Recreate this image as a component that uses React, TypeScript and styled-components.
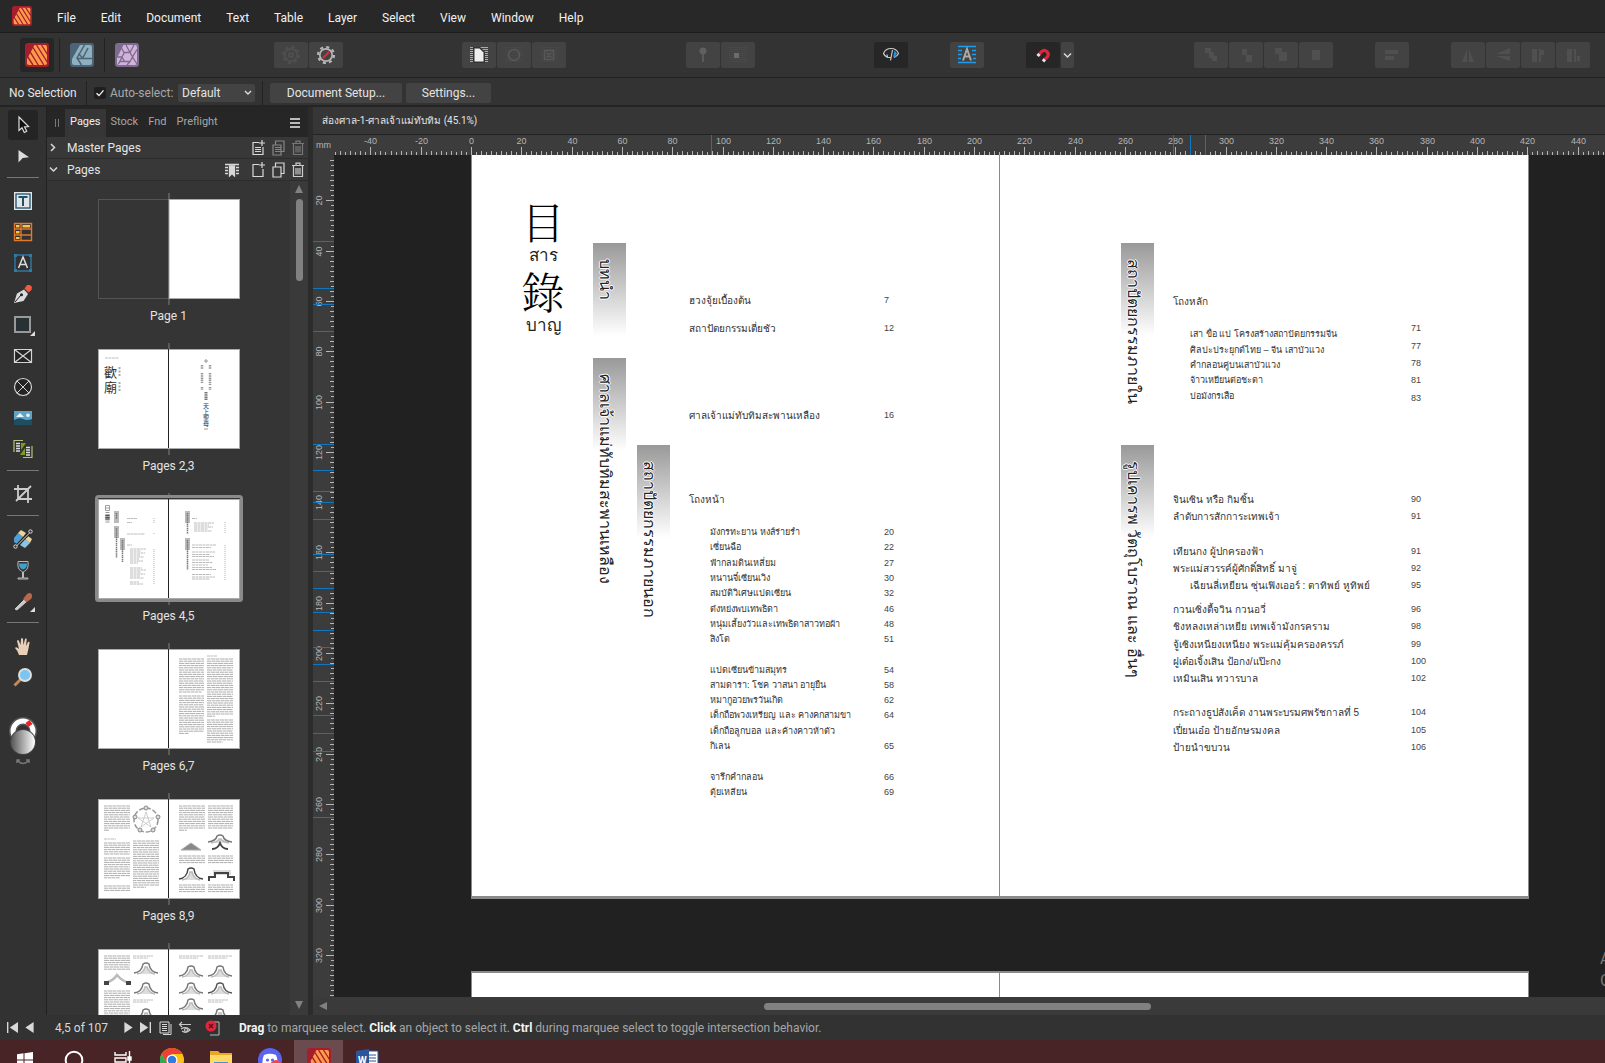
import React from "react";
import styled, { createGlobalStyle, css } from "styled-components";

const UI = `Roboto, "Open Sans", sans-serif`;
const DOC = `"Liberation Sans", "Noto Sans CJK TC", sans-serif`;

const Global = createGlobalStyle`
  * { box-sizing: border-box; }
  html, body { margin: 0; background: #212121; }
  body { font: 12px/16px ${UI}; color: #e4e4e4; overflow: hidden; }
  button, select, input { font: inherit; color: inherit; margin: 0; }
  button { border: 0; padding: 0; background: none; }
  svg { display: block; flex: none; }
  ul { list-style: none; margin: 0; padding: 0; }
`;

const Shell = styled.div`
  height: 100vh;
  display: flex;
  flex-direction: column;
  background: #323232;
  overflow: hidden;
`;

/* ---------- menu bar ---------- */
const MenuBar = styled.header`
  flex: none;
  height: 33px;
  display: flex;
  align-items: center;
  padding-left: 12px;
  background: #282828;
  border-bottom: 1px solid #1d1d1d;
`;
const Menus = styled.nav`
  display: flex;
  gap: 25px;
  padding: 3px 0 0 25px;
`;
const MenuItem = styled.button`
  color: #f2f2f2;
`;

/* ---------- toolbar ---------- */
const Toolbar = styled.div`
  flex: none;
  height: 45px;
  display: flex;
  align-items: center;
  justify-content: space-between;
  padding: 0 15px 0 20px;
  background: #333;
  border-bottom: 1px solid #222;
`;
const Personas = styled.div`
  display: flex;
  align-items: center;
  padding-right: 10px;
`;
const Persona = styled.button<{ $on?: boolean }>`
  width: 34px;
  height: 34px;
  border-radius: 3px;
  display: grid;
  place-items: center;
  background: ${(p) => (p.$on ? "#262626" : "none")};
`;
const Rule = styled.span<{ $h: number; $m: number }>`
  width: 1px;
  height: ${(p) => p.$h}px;
  margin: 0 ${(p) => p.$m}px;
  background: #222;
`;
const Groups = styled.div`
  display: flex;
  gap: 42px;
`;
const Group = styled.div`
  display: flex;
  gap: 1px;
`;
const ToolBtn = styled.button<{ $dark?: boolean; $slim?: boolean }>`
  width: ${(p) => (p.$slim ? 13 : 34)}px;
  height: 26px;
  border-radius: 2px;
  display: grid;
  place-items: center;
  background: ${(p) => (p.$dark ? "#262626" : "#434343")};
`;

/* ---------- context bar ---------- */
const ContextBar = styled.div`
  flex: none;
  height: 29px;
  display: flex;
  align-items: center;
  padding: 3px 0 0 9px;
  background: #333;
  border-bottom: 2px solid #242424;
`;
const Selection = styled.span`
  width: 70px;
  white-space: nowrap;
`;
const Check = styled.label`
  display: flex;
  align-items: center;
  gap: 4px;
  width: 76px;
  color: #a8a8a8;
  white-space: nowrap;
`;
const Tick = styled.input`
  appearance: none;
  flex: none;
  width: 12px;
  height: 12px;
  border-radius: 2px;
  background: #1f1f1f
    url("data:image/svg+xml,%3Csvg xmlns='http://www.w3.org/2000/svg' viewBox='0 0 12 12'%3E%3Cpath d='M2.5 6.2 5 8.6 9.5 3.4' fill='none' stroke='%23eee' stroke-width='1.4'/%3E%3C/svg%3E");
`;
const Drop = styled.select`
  appearance: none;
  width: 77px;
  height: 18px;
  margin-left: 8px;
  padding: 0 4px;
  border: 0;
  border-radius: 2px;
  line-height: 16px;
  background: #434343
    url("data:image/svg+xml,%3Csvg xmlns='http://www.w3.org/2000/svg' viewBox='0 0 8 6'%3E%3Cpath d='M1 1 4 4 7 1' fill='none' stroke='%23ddd' stroke-width='1.4'/%3E%3C/svg%3E")
    no-repeat right 3px center / 8px 6px;
`;
const PushButton = styled.button<{ $w: number }>`
  width: ${(p) => p.$w}px;
  height: 20px;
  margin-right: 4px;
  border-radius: 2px;
  background: #434343;
`;

/* ---------- body ---------- */
const Body = styled.div`
  flex: 1;
  min-height: 0;
  display: flex;
`;
const Tools = styled.div`
  flex: none;
  width: 47px;
  display: flex;
  flex-direction: column;
  align-items: center;
  padding: 3px 1px 0 0;
  background: #323232;
  border-right: 1px solid #202020;
`;
const Tool = styled.button<{ $on?: boolean }>`
  width: 30px;
  height: ${(p) => (p.$on ? 30 : 31)}px;
  border-radius: 3px;
  display: grid;
  place-items: center;
  background: ${(p) => (p.$on ? "#242424" : "none")};
`;
const ToolRule = styled.hr`
  width: 32px;
  height: 1px;
  margin: 6px 0 7px;
  border: 0;
  background: #777;
`;
const ColourWell = styled.div`
  padding-top: 25px;
`;

const Panel = styled.aside`
  flex: none;
  width: 266px;
  display: flex;
  flex-direction: column;
  padding-right: 5px;
  background: #2c2c2c;
`;
const TabStrip = styled.div`
  flex: none;
  height: 30px;
  display: flex;
  align-items: center;
  padding: 2px 8px 0 7px;
  background: #262626;
`;
const Tab = styled.button<{ $on?: boolean }>`
  height: 28px;
  padding: 0 5px 3px;
  font-size: 11px;
  color: ${(p) => (p.$on ? "#f0f0f0" : "#a6a6a6")};
  background: ${(p) => (p.$on ? "#363636" : "none")};
`;
const Spacer = styled.span`
  flex: 1;
`;
const SectionRow = styled.div`
  flex: none;
  height: 21px;
  display: flex;
  align-items: center;
  padding: 0 4px 0 2px;
  margin-bottom: 1px;
  background: #383838;
`;
const SectionName = styled.span`
  flex: 1;
  padding-left: 9px;
`;
const IconBtn = styled.button<{ $ml?: number }>`
  margin-left: ${(p) => p.$ml ?? 4}px;
`;
const ListArea = styled.div`
  flex: 1;
  min-height: 0;
  display: flex;
`;
const Thumbs = styled.ul`
  flex: 1;
  background: #353535;
  overflow: hidden;
  padding-top: 10px;
`;
const Thumb = styled.li`
  height: 150px;
  display: flex;
  flex-direction: column;
  align-items: center;
  gap: 1px;
`;
const ThumbFrame = styled.div`
  height: 116px;
`;
const VScroll = styled.div`
  flex: none;
  width: 18px;
  display: flex;
  flex-direction: column;
  align-items: center;
  justify-content: space-between;
  padding: 4px 0 6px;
  background: #3a3a3a;
`;
const VTop = styled.div`
  display: flex;
  flex-direction: column;
  align-items: center;
  gap: 6px;
`;
const Handle = styled.div<{ $v?: boolean }>`
  border-radius: 4px;
  background: #818181;
  ${(p) => (p.$v ? css`width: 7px; height: 82px;` : css`width: 46%; height: 7px;`)}
`;

const Doc = styled.main`
  flex: 1;
  min-width: 0;
  display: flex;
  flex-direction: column;
  background: #212121;
`;
const DocTab = styled.div`
  flex: none;
  height: 28px;
  padding: 6px 9px;
  font-size: 10px;
  background: #363636;
  border-bottom: 1px solid #232323;
  white-space: nowrap;
`;
const RulerRow = styled.div`
  flex: none;
  height: 20px;
  display: flex;
  background: #3c3c3c;
`;
const Unit = styled.span`
  flex: none;
  width: 21px;
  padding-left: 3px;
  font: 9px/20px "Liberation Sans", sans-serif;
  color: #b5b5b5;
`;
const Split = styled.div`
  flex: 1;
  min-height: 0;
  display: flex;
`;
const RulerBox = styled.div<{ $v?: boolean }>`
  ${(p) => (p.$v ? css`flex: none; width: 21px;` : css`flex: 1;`)}
  min-width: 0;
  overflow: hidden;
  background: #3c3c3c;
`;
const RulerText = styled.text`
  font: 9px "Liberation Sans", sans-serif;
  fill: #b5b5b5;
  text-anchor: middle;
`;
const Canvas = styled.div`
  position: relative;
  flex: 1;
  overflow: hidden;
  background: #212121;
`;
const Spread = styled.article<{ $top: number; $h: number }>`
  position: absolute;
  left: 137px;
  top: ${(p) => p.$top}px;
  width: 1058px;
  height: ${(p) => p.$h}px;
  border: 1px solid #8a8a8a;
  border-width: 2px 1px 3px;
  background: linear-gradient(#8a8a8a, #8a8a8a) 527px 0 / 1px 100% no-repeat #fff;
  color: #333;
  font-family: ${DOC};
`;
const Place = styled.div<{ $x: number; $y: number; $w?: number }>`
  position: absolute;
  left: ${(p) => p.$x}px;
  top: ${(p) => p.$y}px;
  ${(p) => p.$w && css`width: ${p.$w}px;`}
`;
const Title = styled.h1`
  margin: 0;
  width: 60px;
  display: flex;
  flex-direction: column;
  align-items: center;
  font-weight: 300;
  color: #000;
`;
const Han = styled.span`
  font: 300 43px/44px "Noto Serif CJK TC", "Noto Sans CJK TC", sans-serif;
`;
const Thai = styled.span`
  font-size: 17px;
  line-height: 26px;
  color: #222;
`;
const Band = styled.h2`
  margin: 0;
  width: 33px;
  min-height: 93px;
  padding: 16px 8px 0 0;
  display: flex;
  align-items: center;
  writing-mode: vertical-rl;
  font-size: 16px;
  line-height: 25px;
  font-weight: 400;
  white-space: nowrap;
  color: #222;
  background: linear-gradient(#999, #fff) 0 0 / 100% 93px no-repeat;
  text-shadow: 1px 0 #fff, -1px 0 #fff, 0 1px #fff, 0 -1px #fff;
`;
const Rows = styled.ul<{ $h: number; $size: number }>`
  display: grid;
  grid-auto-rows: 1fr;
  align-items: center;
  height: ${(p) => p.$h}px;
  font-size: ${(p) => p.$size}px;
  line-height: 15px;
`;
const Row = styled.li<{ $in?: boolean }>`
  display: flex;
  justify-content: space-between;
  white-space: nowrap;
  padding-left: ${(p) => (p.$in ? 17 : 0)}px;
`;
const PageNo = styled.span`
  width: 20px;
  font-size: 9px;
  color: #444;
`;
const Watermark = styled.div`
  position: absolute;
  left: 1266px;
  bottom: 5px;
  font-size: 16px;
  line-height: 22px;
  color: #777;
  white-space: nowrap;
`;
const HScroll = styled.div`
  flex: none;
  height: 18px;
  display: flex;
  align-items: center;
  padding-left: 6px;
  background: #3a3a3a;
`;
const HTrack = styled.div`
  flex: 1;
  padding-left: 34%;
`;

/* ---------- status + taskbar ---------- */
const Status = styled.footer`
  flex: none;
  height: 25px;
  display: flex;
  align-items: center;
  padding-left: 7px;
  background: #323232;
  color: #a6a6a6;
  b { color: #f4f4f4; font-weight: 700; }
`;
const Nav = styled.div`
  display: flex;
  align-items: center;
  gap: 6px;
  width: 232px;
  color: #d8d8d8;
`;
const Count = styled.span`
  width: 76px;
  padding-left: 14px;
`;
const Taskbar = styled.div`
  flex: none;
  height: 23px;
  display: flex;
  overflow: hidden;
  background: #482427;
`;
const Task = styled.button<{ $on?: boolean }>`
  width: 49px;
  height: 40px;
  display: grid;
  place-items: center;
  background: ${(p) => (p.$on ? "#6c4b4f" : "none")};
`;

/* ---------- drawings ---------- */
const Publisher = ({ s = 24 }: { s?: number }) => (
  <svg width={s} height={s} viewBox="0 0 24 24">
    <rect width="24" height="24" rx="3" fill="#a41f2b" />
    <path d="M9.5 2H20a2 2 0 0 1 2 2v16a2 2 0 0 1-2 2H4a2 2 0 0 1-2-2v-4Z" fill="#ff9a4d" />
    <path d="M2.5 13.500 8 22M5.300 9.200 13.500 22.500M8 4.500 18.800 22M11.500 2 22.500 19.500M16.500 2 22.500 11.500" stroke="#a41f2b" strokeWidth="1.400" />
  </svg>
);
const Designer = () => (
  <svg width="24" height="24" viewBox="0 0 24 24">
    <rect width="24" height="24" rx="3" fill="#4d6379" />
    <path d="M10 2h10a2 2 0 0 1 2 2v16a2 2 0 0 1-2 2H4a2 2 0 0 1-2-2v-4Z" fill="#8fb0bd" />
    <path d="M14.500 2 7 15l4.500 7M7 15.500h15M12.500 15l-4-4.500M12.500 15.500 18 5" stroke="#4d6379" strokeWidth="1.500" fill="none" />
  </svg>
);
const Photo = () => (
  <svg width="24" height="24" viewBox="0 0 24 24">
    <rect width="24" height="24" rx="3" fill="#7d6b92" />
    <path d="M8.500 2H20a2 2 0 0 1 2 2v16a2 2 0 0 1-2 2H4a2 2 0 0 1-2-2v-5Z" fill="#d3b4d8" />
    <path d="M9.500 9.500h5.500l2.500 4.500-2.500 4.500H9.500L7 14ZM6.500 5l2.500 4.500h6L11 2M19 2l-4 7.500M22 6.500 17.500 14 22 21M15 18.500H5M12 22l3-3.500M7 14l-3.500 7M2 14h5" stroke="#7d6b92" strokeWidth="1.300" fill="none" />
  </svg>
);
const Gear = ({ c, slash }: { c: string; slash?: boolean }) => (
  <svg width="20" height="20" viewBox="0 0 20 20" fill="none" stroke={c}>
    <circle cx="10" cy="10" r="6.200" strokeWidth="1.800" />
    <circle cx="10" cy="10" r="8" strokeWidth="2.200" strokeDasharray="3.100 3.180" />
    {slash ? <path d="m7 13 6-6" stroke="#e0263c" strokeWidth="2.400" /> : <circle cx="10" cy="10" r="2" strokeWidth="2" />}
  </svg>
);
const Hatch = ({ c, children }: { c: string; children?: React.ReactNode }) => (
  <svg width="20" height="20" viewBox="0 0 20 20" fill="none">
    <path d="M1 2.500h18M1 4.500h18M1 6.500h18M1 8.500h18M1 10.500h18M1 12.500h18M1 14.500h18M1 16.500h18" stroke={c} />
    {children}
  </svg>
);
const faint = "#505050";
const Squares = ({ d }: { d: string }) => (
  <svg width="20" height="20" viewBox="0 0 20 20"><path d={d} fill={faint} /></svg>
);
const Magnet = () => (
  <svg width="18" height="18" viewBox="0 0 18 18" fill="none" strokeWidth="3.200">
    <path d="M5 8.500 7.500 5.600a4 4 0 0 1 6 5.200L10 14.200" stroke="#e0263c" />
    <path d="M5.400 8 3.600 10M10.800 13.400 9 15.300" stroke="#e8e8e8" />
  </svg>
);
const Chevron = ({ d = "M1 1.500 4.500 5 8 1.500", w = 9, h = 7 }) => (
  <svg width={w} height={h} fill="none" stroke="#d8d8d8" strokeWidth="1.500"><path d={d} /></svg>
);
const Tri = ({ d, s = 8, c = "#818181" }: { d: string; s?: number; c?: string }) => (
  <svg width={s} height={s} viewBox="0 0 8 8"><path d={d} fill={c} /></svg>
);
const Trash = ({ c }: { c: string }) => (
  <svg width="12" height="16" viewBox="0 0 12 16" fill="none" stroke={c} strokeWidth="1.200">
    <path d="M0 3.500h12M4 3V1.200h4V3M1.500 3.500v11h9v-11M4 6v6.500M6 6v6.500M8 6v6.500" />
  </svg>
);
const Sheet = ({ c, lines, plus }: { c: string; lines?: boolean; plus?: boolean }) => (
  <svg width="13" height="16" viewBox="0 0 13 16" fill="none" stroke={c} strokeWidth="1.200">
    {plus ? <path d="M7 2.500H1v12h10V7M10 0v6M7 3h6" /> : <path d="M1 5h8v10H1ZM3.500 4.500V1H12v10.500H9.500" />}
    {lines && <path d="M3 7.500h6M3 9.500h6M3 11.500h6" />}
  </svg>
);

const toolIcons: Record<string, React.ReactNode> = {
  Move: <path d="M6 2v13.500l3-2.700 2.300 4.700 2.400-1.200-2.200-4.500 4-.3Z" fill="#111" stroke="#ddd" strokeWidth="1.200" />,
  Node: <path d="M5.500 4v12.500l4.200-4.500 6.300-.8Z" fill="#ddd" />,
  "Frame Text": <><rect x="1" y="1" width="18" height="18" fill="#e2e6e8" /><rect x="3" y="3" width="14" height="14" fill="none" stroke="#1d5267" strokeWidth="1.300" /><path d="M5.500 6h9M10 6v9" stroke="#1d5267" strokeWidth="2" /></>,
  Table: <><path d="M1.500 1.500h17v17h-17ZM1.500 7h17M1.500 13h17M8 1.500v17" fill="none" stroke="#e2772f" strokeWidth="1.400" /><path d="M3 3h3.500v2.500H3ZM9.500 3H17v2.500H9.500ZM3 9h3.500v2.500H3ZM3 15h3.500v2H3Z" fill="#f0c84b" /></>,
  "Artistic Text": <><rect x="2" y="2" width="16" height="16" fill="none" stroke="#2e7ba6" strokeWidth="1.400" /><path d="M1 1h3v3H1ZM16 1h3v3h-3ZM1 16h3v3H1ZM16 16h3v3h-3Z" fill="#2e7ba6" /><path d="m5.500 15 4.500-11 4.500 11M7 11.500h6" stroke="#ddd" strokeWidth="1.500" fill="none" /></>,
  Pen: <><path d="M1 19 4 9.500l7-4 4 4.500-4.500 7Z" fill="#dcdcdc" /><path d="m2 18 6-7" stroke="#222" /><circle cx="8.500" cy="10.800" r="1.500" fill="#222" /><path d="m11.500 4.500 2.500-3.500h3l2 2-.5 3-3 2.500Z" fill="#ee5a45" /></>,
  Rectangle: <><rect x="2" y="2" width="15" height="15" fill="#273033" stroke="#999" strokeWidth="2" /><path d="M22 16v5h-5Z" fill="#ddd" /></>,
  "Picture Frame": <path d="M1.500 3.500h17v13h-17ZM1.500 3.500l17 13M18.500 3.500l-17 13" fill="#242424" stroke="#d4d4d4" strokeWidth="1.200" />,
  Ellipse: <><circle cx="10" cy="10" r="8.500" fill="#242424" stroke="#d4d4d4" strokeWidth="1.200" /><path d="m4 4 12 12M16 4 4 16" stroke="#d4d4d4" /></>,
  "Place Image": <><rect x="1" y="3" width="18" height="14" fill="#5fa4c8" /><path d="M1 12q5-3 9-1t9 0v6H1Z" fill="#1d4f60" /><path d="m3 9 4-4 4 4ZM15 5.500a1.800 1.800 0 1 1-.1 3.600 1.800 1.800 0 0 1 .1-3.600" fill="#eef4f8" /></>,
  "Data Merge": <><path d="M1 13V1.500h9M19 7v11.500h-9" fill="none" stroke="#b4c37b" strokeWidth="1.200" /><path d="M3 4.500h4M3 7h4M3 9.500h4M3 12h4M13 8.500h4M13 11h4M13 13.500h4M13 16h4" stroke="#ddd" strokeWidth="1.300" /><path d="M8 4h5L8 11ZM12 9v7H7Z" fill="#7c9c1c" /></>,
  Crop: <path d="M5 1v14h14M1 5h14v14M3 17 18 2" fill="none" stroke="#ccc" strokeWidth="1.800" />,
  Gradient: <><path d="m1 9 4-5 5 4-6 7-3-2Z" fill="#4a9fd4" /><path d="m5 4 3-3 5 3-3 4Z" fill="#ecd29c" /><path d="m7 16 5-6 5 4-5 5Z" fill="#8cc5e4" /><path d="m12 10 3-3 4 3-2 4Z" fill="#ecd29c" /><path d="M3 17.500 17 3.500" stroke="#222" strokeWidth="3" /><path d="M3 17.500 17 3.500" stroke="#ddd" /><circle cx="2.500" cy="17.500" r="1.700" fill="#333" stroke="#ddd" /><circle cx="17.500" cy="2.500" r="1.700" fill="#333" stroke="#ddd" /></>,
  Transparency: <><path d="M5 1.500h10q1 8-3.500 9.500L10.500 12v6h4.500v1H5v-1h4.500v-6l-1-1Q4 9.500 5 1.500Z" fill="#333" stroke="#bbb" /><path d="M6 3.500h8q0 5-4 6-4-1-4-6Z" fill="#3f9fd0" /></>,
  Picker: <><path d="m2 18 9-9 2 2-9 8Z" fill="#ccc" stroke="#ccc" /><path d="m10 8 4-5q3-2 4.500 0t0 4.500l-5 4Z" fill="#b8694b" /><path d="M22 16v5h-5Z" fill="#ddd" /></>,
  View: <path d="M6 19q-1-4-4-7 1-2 4 1L4 5q1-2 2 0l1.500 4L8 3q1-2 2 0l.5 6 1.500-6q1.500-1.500 1.700.5L13 10l2-4q2-1 1.500 1-1 6-2.500 12Z" fill="#e9cfb8" />,
  Zoom: <><path d="m7.500 12.500-6 6" stroke="#c08a55" strokeWidth="3" /><circle cx="12" cy="8" r="6" fill="#7ac6f1" stroke="#ddd" strokeWidth="2" /></>,
};
const toolOrder = ["Move", "Node", "-", "Frame Text", "Table", "Artistic Text", "Pen", "Rectangle", "Picture Frame", "Ellipse", "Place Image", "Data Merge", "-", "Crop", "-", "Gradient", "Transparency", "Picker", "-", "View", "Zoom"];

/* ---------- rulers ---------- */
const STEP = 2.515;
function Ruler({ vertical, origin, from, to, marks }: { vertical?: boolean; origin: number; from: number; to: number; marks: number[] }) {
  const ticks: React.ReactNode[] = [];
  for (let v = from; v <= to; v += 2) {
    const p = Math.round(origin + v * STEP) + 0.5;
    const len = v % 20 === 0 ? 8 : v % 4 === 0 ? 4 : 3;
    ticks.push(<path key={v} d={vertical ? `M${21 - len} ${p}h${len}` : `M${p} ${20 - len}v${len}`} stroke="#b5b5b5" />);
    if (v % 20 === 0 && !(vertical && v === 0))
      ticks.push(
        vertical
          ? <RulerText key={"t" + v} transform={`translate(9 ${p}) rotate(-90)`}>{v}</RulerText>
          : <RulerText key={"t" + v} x={p} y={9}>{v}</RulerText>
      );
  }
  return (
    <svg width={vertical ? 21 : 1280} height={vertical ? 900 : 20}>
      {ticks}
      {marks.map((m) => <path key={m} d={vertical ? `M0 ${m + 0.5}h21` : `M${m + 0.5} 0v20`} stroke="#1377bd" />)}
    </svg>
  );
}

/* ---------- thumbnails ---------- */
function TextBlock({ x, y, w, n, last = 1 }: { x: number; y: number; w: number; n: number; last?: number }) {
  return (
    <>
      {Array.from({ length: n }, (_, i) => (
        <path key={i} d={`M${x} ${y + i * 2.200}h${i === n - 1 ? w * last : w}`} stroke="#8c8c8c" strokeWidth="1" strokeDasharray={`${3 + (i % 3)} .6 ${5 - (i % 2)} .4`} opacity=".7" />
      ))}
    </>
  );
}
const Roof = ({ x, y, tall = 10, c = "#777" }: { x: number; y: number; tall?: number; c?: string }) => (
  <g transform={`translate(${x} ${y})`} fill="none" stroke={c}>
    <path d={`M3 ${tall + 1}q7-1 8-${tall - 3}h2q2 ${tall - 4} 8 ${tall - 3}`} fill="#ddd" stroke="#bbb" strokeWidth="1.500" />
    <path d={`M0 ${tall}q8-1 9-${tall - 1}q3-2 6 0q1 ${tall - 2} 9 ${tall - 1}`} strokeWidth="1.500" />
  </g>
);
const Bars = ({ x, ys, w }: { x: number; ys: number[]; w: number }) => (
  <>{ys.map((y, i) => <path key={y} d={`M${x} ${y}h${w - (i * 5) % 9}`} stroke="#b4b4b4" strokeDasharray="3 .5" strokeWidth=".9" />)}</>
);
const Tiny = styled.text<{ $s: number; $c?: string }>`
  font: ${(p) => p.$s}px "Noto Sans CJK TC", sans-serif;
  fill: ${(p) => p.$c ?? "#333"};
`;
const thumbArt: Record<string, React.ReactNode> = {
  "Page 1": null,
  "Pages 2,3": (
    <>
      <Bars x={7} ys={[9]} w={14} />
      <Tiny $s={13} x="6" y="28">歡</Tiny>
      <Tiny $s={13} x="6" y="43">廟</Tiny>
      <path d="M21.500 18v10M21.500 33v10" stroke="#aaa" strokeDasharray="2 1.500" strokeWidth="2" />
      <path d="M104 16v4M112 16v4M104 24v10M112 24v12M104 38v3M112 38v3" stroke="#999" strokeDasharray="1.500 .7" strokeWidth="2.500" />
      <path d="M106 12h4M108 10v4M106 80h4" stroke="#999" />
      <path d="M108 43v8" stroke="#777" strokeDasharray="1.500 .7" strokeWidth="3" />
      {["天", "上", "聖", "母"].map((c, i) => <Tiny key={c} $s={6} x="105" y={59 + i * 6}>{c}</Tiny>)}
    </>
  ),
  "Pages 4,5": (
    <>
      <path d="M7.500 6.500h4v5h-4ZM7.500 9h4" fill="none" stroke="#888" strokeWidth=".8" />
      <path d="M9.500 13v1.500M9.500 22.500v1.500" stroke="#999" strokeWidth="4" strokeDasharray="1 .5" />
      <path d="M9.500 15.500v6" stroke="#555" strokeWidth="4.500" strokeDasharray="1.500 .4" />
      <g fill="#bbb"><path d="M16 12h5v12h-5ZM16 27h5v12h-5ZM22 39h5v12h-5ZM87 12h5v12h-5ZM87 39h5v12h-5Z" /></g>
      <path d="M18.500 14v6M18.500 29v30M24.500 41v22M89.500 14v21M89.500 41v30" stroke="#777" strokeDasharray="1.500 .6" strokeWidth="1.500" />
      <Bars x={29} ys={[19.500, 23.500]} w={10} />
      <Bars x={29} ys={[35]} w={18} />
      <Bars x={29} ys={[46]} w={5} />
      <Bars x={32} ys={[50, 52, 54, 56, 58, 60, 62, 64, 69, 71, 73, 75, 77, 79, 83, 85]} w={16} />
      <Bars x={94} ys={[19.500]} w={5} />
      <Bars x={96} ys={[24, 26, 28, 30, 32]} w={20} />
      <Bars x={94} ys={[46, 48.500, 53, 55.500, 57.500, 61, 63.500, 66, 68.500, 70.500, 75.500, 78, 80]} w={24} />
      <path d="M56 19v5M56 34v2M56 50v36M127 23v11M127 46v35" stroke="#ccc" strokeDasharray="1 1" strokeWidth="1.500" />
    </>
  ),
  "Pages 6,7": (
    <>
      <TextBlock x={81} y={10} w={25} n={16} last={0.9} />
      <TextBlock x={81} y={47} w={25} n={18} last={0.4} />
      <Bars x={109} ys={[7]} w={10} />
      <TextBlock x={109} y={10} w={26} n={27} last={0.3} />
      <TextBlock x={109} y={71} w={26} n={11} last={0.6} />
    </>
  ),
  "Pages 8,9": (
    <>
      <TextBlock x={6} y={7} w={26} n={12} last={0.2} />
      <Bars x={6} ys={[40]} w={12} />
      <TextBlock x={6} y={44} w={26} n={6} />
      <TextBlock x={6} y={59} w={26} n={10} last={0.6} />
      <TextBlock x={6} y={87} w={26} n={3} />
      <circle cx="48" cy="21" r="12" fill="none" stroke="#999" strokeWidth="1.500" strokeDasharray="5 2" />
      <path d="m48 13 5 15-13-9h16l-13 9Z" fill="none" stroke="#bbb" strokeWidth=".7" />
      <g fill="#ddd" stroke="#888"><circle cx="48" cy="9" r="2" /><circle cx="37" cy="18" r="2" /><circle cx="60" cy="18" r="2" /><circle cx="42" cy="31" r="2" /><circle cx="55" cy="31" r="2" /></g>
      <TextBlock x={35} y={42} w={26} n={22} last={0.5} />
      <TextBlock x={81} y={7} w={26} n={12} last={0.3} />
      <TextBlock x={110} y={7} w={25} n={11} />
      <path d="m83 51 10-7 10 7Z" fill="#888" stroke="#aaa" /><Roof x={110} y={36} tall={7} /><path d="M114 50q6 0 8-6 2 6 8 6" fill="none" stroke="#444" strokeWidth="1.800" /><Roof x={81} y={69} tall={11} c="#444" />
      <path d="M115 71h18v5h-18Z" fill="#ddd" /><path d="M111 82v-4h6v-4h13v4h6v4" fill="none" stroke="#444" strokeWidth="2" />
      <TextBlock x={81} y={57} w={26} n={4} /><TextBlock x={110} y={57} w={25} n={4} />
      <TextBlock x={81} y={86} w={26} n={4} /><TextBlock x={110} y={86} w={25} n={4} />
    </>
  ),
  "Pages 10,11": (
    <>
      <TextBlock x={6} y={7} w={26} n={7} /><path d="M7 34q8-2 12-8 5 6 12 8" fill="none" stroke="#bbb" strokeWidth="2.500" />
      <path d="M6 32h5v4H6ZM28 32h5v4h-5Z" fill="#444" /><TextBlock x={6} y={42} w={26} n={12} />
      <Bars x={35} ys={[7, 9]} w={20} /><Roof x={36} y={14} /><Roof x={36} y={34} />
      <Bars x={81} ys={[7, 9]} w={24} /><Bars x={110} ys={[7, 9]} w={24} />
      <Roof x={81} y={17} /><Roof x={110} y={17} /><Roof x={81} y={34} /><Roof x={110} y={34} c="#555" /><Roof x={81} y={50} /><Roof x={36} y={60} /><Roof x={110} y={60} />
      <Bars x={35} ys={[51, 53]} w={20} /><Bars x={110} ys={[51, 53]} w={20} />
    </>
  ),
};
const Thumbnail = ({ name }: { name: string }) => {
  const single = name === "Page 1";
  return (
    <svg width="150" height="116" viewBox="-4 -8 150 116">
      <path d="M71-6v112" stroke="#5a5a5a" strokeWidth="2" />
      {name === "Pages 4,5" && <rect x="-1.500" y="-2.500" width="145" height="104" rx="2" fill="#353535" stroke="#8a8a8a" strokeWidth="3" />}
      <rect x="0.500" y="0.500" width="141" height="99" fill={single ? "#353535" : "#fff"} stroke={single ? "#555" : "#aaa"} />
      {single && <rect x="71" y="0.500" width="70.500" height="99" fill="#fff" stroke="#aaa" />}
      {thumbArt[name]}
      {!single && <path d="M70.500 0v99" stroke="#222" />}
    </svg>
  );
};

/* ---------- document text ---------- */
type Entry = [string, string?, boolean?] | null;
const frontHall: Entry[] = [
  ["มังกรทะยาน หงส์ร่ายรำ", "20"], ["เซี่ยนฉือ", "22"], ["ฟ้ากลมดินเหลี่ยม", "27"], ["หนานจี๋เซียนเวิง", "30"],
  ["สมบัติวิเศษแปดเซียน", "32"], ["ต๋งหย่งพบเทพธิดา", "46"], ["หนุ่มเลี้ยงวัวและเทพธิดาสาวทอผ้า", "48"], ["สิงโต", "51"], null,
  ["แปดเซียนข้ามสมุทร", "54"], ["สามดารา: โชค วาสนา อายุยืน", "58"], ["หมากูอวยพรวันเกิด", "62"],
  ["เด็กถือพวงเหรียญ และ คางคกสามขา", "64"], ["เด็กถือลูกบอล และค้างคาวห้าตัว"], ["กิเลน", "65"], null,
  ["จารึกคำกลอน", "66"], ["ตุ้ยเหลียน", "69"],
];
const mainHall: Entry[] = [["เสา ขื่อ แป โครงสร้างสถาปัตยกรรมจีน"], ["ศิลปะประยุกต์ไทย – จีน เสาบัวแวง"], ["คำกลอนคู่บนเสาบัวแวง"], ["จ้าวเหยียนต่อชะตา"], ["บ่อมังกรเสือ"]];
const shrineA: Entry[] = [["จินเซิน หรือ กิมซิ้น", "90"], ["ลำดับการสักการะเทพเจ้า", "91"], null, ["เทียนกง ผู้ปกครองฟ้า", "91"], ["พระแม่สวรรค์ผู้ศักดิ์สิทธิ์ มาจู่", "92"], ["เฉียนลี่เหยียน ซุ่นเฟิงเออร์ : ตาทิพย์ หูทิพย์", "95", true]];
const shrineB: Entry[] = [["กวนเซิ่งตี้จวิน กวนอวี่", "96"], ["ชิงหลงเหล่าเหยีย เทพเจ้ามังกรคราม", "98"], ["จู้เซิงเหนียงเหนียง พระแม่คุ้มครองครรภ์", "99"], ["ฝูเต๋อเจิ้งเสิน ป้อกง/แป๊ะกง", "100"], ["เหมินเสิน ทวารบาล", "102"], null, ["กระถางธูปสังเค็ด งานพระบรมศพรัชกาลที่ 5", "104"], ["เปี่ยนเอ๋อ ป้ายอักษรมงคล", "105"], ["ป้ายนำขบวน", "106"]];

function Contents({ x, y, w, h, size = 10, rows }: { x: number; y: number; w?: number; h: number; size?: number; rows: Entry[] }) {
  return (
    <Place $x={x} $y={y} $w={w}>
      <Rows $h={h} $size={size}>
        {rows.map((r, i) => (
          <Row key={i} $in={!!r?.[2]}><span>{r?.[0]}</span>{r?.[1] && <PageNo>{r[1]}</PageNo>}</Row>
        ))}
      </Rows>
    </Place>
  );
}

export default function App() {
  return (
    <Shell>
      <Global />
      <MenuBar>
        <Publisher s={20} />
        <Menus>
          {["File", "Edit", "Document", "Text", "Table", "Layer", "Select", "View", "Window", "Help"].map((m) => <MenuItem key={m}>{m}</MenuItem>)}
        </Menus>
      </MenuBar>

      <Toolbar>
        <Personas>
          <Persona $on aria-label="Publisher"><Publisher /></Persona>
          <Rule $h={34} $m={5} />
          <Persona aria-label="Designer"><Designer /></Persona>
          <Rule $h={34} $m={5} />
          <Persona aria-label="Photo"><Photo /></Persona>
        </Personas>
        <Group>
          <ToolBtn aria-label="Preflight settings"><Gear c="#4f4f4f" /></ToolBtn>
          <ToolBtn aria-label="Preflight off"><Gear c="#b5b5b5" slash /></ToolBtn>
        </Group>
        <Group>
          <ToolBtn aria-label="Wrap none"><Hatch c="#aaa"><path d="M5.500 3.500h5l4 4v9h-9Z" fill="#eee" stroke="#333" strokeWidth="3" /><path d="M5.500 3.500h5l4 4v9h-9Z" fill="#eee" /></Hatch></ToolBtn>
          <ToolBtn aria-label="Wrap round"><Hatch c="#474747"><circle cx="10" cy="10" r="5.500" stroke="#585858" strokeWidth="1.500" /></Hatch></ToolBtn>
          <ToolBtn aria-label="Wrap box"><Hatch c="#474747"><path d="M5.500 5.500h9v9h-9Zm2 2 5 5m0-5-5 5" stroke="#585858" strokeWidth="1.500" /></Hatch></ToolBtn>
        </Group>
        <Group>
          <ToolBtn aria-label="Pin"><svg width="20" height="20"><circle cx="10" cy="6" r="3.500" fill="#606060" /><path d="M10 9v8" stroke="#606060" strokeWidth="1.500" /></svg></ToolBtn>
          <ToolBtn aria-label="Inline"><Hatch c="#484848"><path d="M6 8h5v5H6Z" fill="#6c6c6c" /></Hatch></ToolBtn>
        </Group>
        <Groups>
          <ToolBtn $dark aria-label="Preview"><svg width="20" height="20" fill="none" stroke="#c8c8c8" strokeWidth="1.200"><path d="M6.500 12.500Q3 10.500 2.500 8.500 4.500 3.500 10 3.500T17.500 8.500Q16 11.500 13 12.500M6.500 12.500 6 9.500M6.500 12.500H9.500M11.500 5 9.500 15.500" /><path d="M12 12.500 13.500 5.500l2.500 3q-1 3-4 4Z" fill="#1695ec" stroke="none" /></svg></ToolBtn>
          <ToolBtn aria-label="Baseline grid"><svg width="20" height="20" fill="none"><path d="M1 1.500h18M1 5.500h4M15 5.500h4M1 9.500h4M15 9.500h4M1 13.500h3M16 13.500h3M1 17.500h18" stroke="#1c9df2" strokeWidth="1.600" /><path d="M6 15.500 10 4l4 11.500M7.500 11.500h5" stroke="#aaa" strokeWidth="2" /></svg></ToolBtn>
          <Group>
            <ToolBtn $dark aria-label="Snapping"><Magnet /></ToolBtn>
            <ToolBtn $slim aria-label="Snapping options"><Chevron /></ToolBtn>
          </Group>
        </Groups>
        <Groups>
          <Group>
            <ToolBtn aria-label="To back"><Squares d="M4 3h6v5H4ZM8 7h5v6H8ZM11 11h5v5h-5Z" /></ToolBtn>
            <ToolBtn aria-label="Back one"><Squares d="M6 4h5v6H6ZM10 10h6v7h-6Z" /></ToolBtn>
            <ToolBtn aria-label="Forward one"><Squares d="M4 3h7v6H4ZM8 7h8v9H8Z" /></ToolBtn>
            <ToolBtn aria-label="To front"><Squares d="M6 5h8v10H6Z" /></ToolBtn>
          </Group>
          <ToolBtn aria-label="Align"><Squares d="M3 5h13v4H3ZM3 11h9v4H3Z" /></ToolBtn>
          <Group>
            <ToolBtn aria-label="Flip horizontal"><Squares d="M9 4v13H4ZM11 4v13h5Z" /></ToolBtn>
            <ToolBtn aria-label="Flip vertical"><Squares d="m3 9 14-6v6ZM3 11h14v5Z" /></ToolBtn>
            <ToolBtn aria-label="Rotate left"><Squares d="M4 4h5v13H4ZM11 4h2v13h-2ZM13 5h3v5h-3Z" /></ToolBtn>
            <ToolBtn aria-label="Rotate right"><Squares d="M4 4h5v13H4ZM11 4h2v13h-2ZM14 11h3v5h-3Z" /></ToolBtn>
          </Group>
        </Groups>
      </Toolbar>

      <ContextBar>
        <Selection>No Selection</Selection>
        <Rule $h={24} $m={7} />
        <Check><Tick type="checkbox" defaultChecked />Auto-select:</Check>
        <Drop aria-label="Auto-select mode" defaultValue="Default"><option>Default</option></Drop>
        <Rule $h={24} $m={7} />
        <PushButton $w={132}>Document Setup...</PushButton>
        <PushButton $w={85}>Settings...</PushButton>
      </ContextBar>

      <Body>
        <Tools>
          {toolOrder.map((t, i) =>
            t === "-" ? <ToolRule key={i} /> : (
              <Tool key={t} $on={t === "Move"} aria-label={t + " Tool"}>
                <svg width="20" height="20" viewBox="0 0 20 20" overflow="visible">{toolIcons[t]}</svg>
              </Tool>
            )
          )}
          <ColourWell>
            <svg width="30" height="52" viewBox="0 0 30 52" fill="none">
              <defs><linearGradient id="well"><stop stopColor="#555" /><stop offset="1" stopColor="#fff" /></linearGradient></defs>
              <circle cx="15" cy="14" r="10" stroke="#555" strokeWidth="8" />
              <circle cx="15" cy="14" r="10" stroke="#fff" strokeWidth="5" />
              <path d="m19 8 4-3" stroke="#e22" strokeWidth="5" />
              <circle cx="15" cy="25" r="13" fill="#444" /><circle cx="15" cy="25" r="12" fill="url(#well)" />
              <path d="M9 43q6 7 12 0M9 46v-3h3M18 43h3v3" stroke="#777" strokeWidth="1.500" />
            </svg>
          </ColourWell>
        </Tools>

        <Panel>
          <TabStrip>
            <svg width="11" height="10"><path d="M1.500 1v8M4.500 1v8" stroke="#777" /></svg>
            <Tab $on>Pages</Tab><Tab>Stock</Tab><Tab>Fnd</Tab><Tab>Preflight</Tab>
            <Spacer />
            <IconBtn aria-label="Panel menu"><svg width="10" height="10"><path d="M0 1h10M0 5h10M0 9h10" stroke="#bbb" strokeWidth="2" /></svg></IconBtn>
          </TabStrip>
          <SectionRow>
            <Chevron d="M2 1 5.500 4.500 2 8" h={9} />
            <SectionName>Master Pages</SectionName>
            <IconBtn aria-label="Add master"><Sheet c="#d8d8d8" plus lines /></IconBtn>
            <IconBtn $ml={7} aria-label="Duplicate master"><Sheet c="#858585" lines /></IconBtn>
            <IconBtn $ml={7} aria-label="Delete master"><Trash c="#777" /></IconBtn>
          </SectionRow>
          <SectionRow>
            <Chevron />
            <SectionName>Pages</SectionName>
            <IconBtn aria-label="Sections"><svg width="14" height="14" fill="none" stroke="#d8d8d8" strokeWidth="1.300"><path d="M0 1.500h14M0 4.500h3M11 4.500h3M0 7.500h3M11 7.500h3M0 10.500h3M11 10.500h3" /><path d="M4.500 3h5v10L7 10.500 4.500 13Z" fill="#d8d8d8" /></svg></IconBtn>
            <IconBtn $ml={13} aria-label="Add page"><Sheet c="#d8d8d8" plus /></IconBtn>
            <IconBtn $ml={7} aria-label="Duplicate page"><Sheet c="#d8d8d8" /></IconBtn>
            <IconBtn $ml={7} aria-label="Delete page"><Trash c="#ccc" /></IconBtn>
          </SectionRow>
          <ListArea>
            <Thumbs>
              {Object.keys(thumbArt).map((n) => (
                <Thumb key={n}><ThumbFrame><Thumbnail name={n} /></ThumbFrame><span>{n}</span></Thumb>
              ))}
            </Thumbs>
            <VScroll>
              <VTop><Tri d="M4 0 8 8H0Z" /><Handle $v /></VTop>
              <Tri d="M4 8 0 0h8Z" />
            </VScroll>
          </ListArea>
        </Panel>

        <Doc>
          <DocTab>ส่องศาล-1-ศาลเจ้าแม่ทับทิม (45.1%)</DocTab>
          <RulerRow>
            <Unit>mm</Unit>
            <RulerBox><Ruler origin={137} from={-54} to={454} marks={[377, 839, 856, 871]} /></RulerBox>
          </RulerRow>
          <Split>
            <RulerBox $v>
              <Ruler vertical origin={-5} from={4} to={336} marks={[86, 133, 149, 176, 289, 315, 336, 347, 364, 399, 416, 433, 457, 475, 492, 509, 526, 560, 578, 596, 662]} />
            </RulerBox>
            <Canvas>
              <Spread $top={-3} $h={747}>
                <Place $x={41} $y={45}>
                  <Title><Han>目</Han><Thai>สาร</Thai><Han>錄</Han><Thai>บาญ</Thai></Title>
                </Place>
                <Place $x={121} $y={89}><Band>บทนำ</Band></Place>
                <Place $x={121} $y={204}><Band>ศาลเจ้าแม่ทับทิมสะพานเหลือง</Band></Place>
                <Place $x={165} $y={291}><Band>สถาปัตยกรรมภายนอก</Band></Place>
                <Place $x={649} $y={89}><Band>สถาปัตยกรรมภายใน</Band></Place>
                <Place $x={649} $y={291}><Band>รูปเคารพ วัตถุโบราณ และ อื่นๆ</Band></Place>
                <Contents x={217} y={132} w={215} h={57} rows={[["ฮวงจุ้ยเบื้องต้น", "7"], ["สถาปัตยกรรมเตี่ยชัว", "12"]]} />
                <Contents x={217} y={252} w={215} h={18} rows={[["ศาลเจ้าแม่ทับทิมสะพานเหลือง", "16"]]} />
                <Contents x={217} y={336} h={18} rows={[["โถงหน้า"]]} />
                <Contents x={238} y={371} w={194} h={275} size={9} rows={frontHall} />
                <Contents x={701} y={138} h={18} rows={[["โถงหลัก"]]} />
                <Contents x={718} y={173} h={77} size={9} rows={mainHall} />
                <Contents x={939} y={166} w={20} h={87} rows={[["", "71"], ["", "77"], ["", "78"], ["", "81"], ["", "83"]]} />
                <Contents x={701} y={337} w={258} h={103} rows={shrineA} />
                <Contents x={701} y={447} w={258} h={155} rows={shrineB} />
              </Spread>
              <Spread $top={816} $h={60} />
              <Watermark>Activate Windows<br />Go to Settings to activate Windows.</Watermark>
            </Canvas>
          </Split>
          <HScroll><Tri d="M0 4 8 0v8Z" /><HTrack><Handle /></HTrack></HScroll>
        </Doc>
      </Body>

      <Status>
        <Nav>
          <Tri d="M0 0h1v8H0ZM2 4l6-4v8Z" s={11} c="#d8d8d8" />
          <Tri d="M1 4l6-4v8Z" s={11} c="#d8d8d8" />
          <Count>4,5 of 107</Count>
          <Tri d="M7 4 1 0v8Z" s={11} c="#d8d8d8" />
          <Tri d="M8 0H7v8h1ZM6 4 0 0v8Z" s={11} c="#d8d8d8" />
          <svg width="15" height="14" viewBox="-2 0 15 14" fill="none" stroke="#d8d8d8"><path d="M1 1h9v11H1ZM3 3.500h5M3 5.500h5M3 7.500h5M3 9.500h5M12 3v10.500H4" /></svg>
          <svg width="14" height="14" fill="none" stroke="#c8c8c8" strokeWidth="1.200"><path d="M4 1 1.500 3.500 4 6M1.500 3.500H13M3 8q5-3 9 1-4 4-8 1" /><circle cx="8" cy="9" r="1.500" /></svg>
          <svg width="24" height="16" viewBox="-7 0 24 16"><path d="M8 2h6v13H5" fill="none" stroke="#b8b8b8" /><circle cx="6" cy="6" r="5.500" fill="#e0263c" /><path d="m4 4 4 4m0-4-4 4" stroke="#5c1018" strokeWidth="1.500" /></svg>
        </Nav>
        <span><b>Drag</b> to marquee select. <b>Click</b> an object to select it. <b>Ctrl</b> during marquee select to toggle intersection behavior.</span>
      </Status>

      <Taskbar>
        <Task aria-label="Start"><svg width="16" height="16" fill="#fff"><path d="M0 2.200 6.500 1.300v6.200H0ZM7.500 1.200 16 0v7.500H7.500ZM0 8.500h6.500v6.200L0 13.800ZM7.500 8.500H16V16l-8.500-1.200Z" /></svg></Task>
        <Task aria-label="Search"><svg width="20" height="22"><circle cx="10" cy="11" r="8.300" fill="none" stroke="#fff" strokeWidth="2" /></svg></Task>
        <Task aria-label="Task view"><svg width="18" height="18" fill="none" stroke="#fff" strokeWidth="1.400"><path d="M1 1v3h11V1M1 17v-3h11v3M1 7h11v4H1ZM15.500 0v18" /><path d="M14 6h3v3h-3Z" fill="#fff" /></svg></Task>
        <Task aria-label="Chrome"><svg width="24" height="24" viewBox="0 0 24 24"><circle cx="12" cy="12" r="12" fill="#fbc116" /><path d="M1.600 6A12 12 0 0 1 22.400 6H12L7 15Z" fill="#ea4335" /><path d="M1.600 6A12 12 0 0 0 12 24l5-9H7Z" fill="#34a853" /><circle cx="12" cy="12" r="5.500" fill="#fff" /><circle cx="12" cy="12" r="4.300" fill="#2f7de1" /></svg></Task>
        <Task aria-label="Files"><svg width="22" height="20"><path d="M0 1h8l2 2h12v17H0Z" fill="#e8a825" /><path d="M0 5h22v15H0Z" fill="#ffd866" /><path d="M4 12h14v8H4Z" fill="#3c97dd" /></svg></Task>
        <Task aria-label="Discord"><svg width="24" height="24"><circle cx="12" cy="12" r="12" fill="#5865f2" /><path d="M6 7q6-2.500 12 0 2 4 1.500 9l-3.500 1.500-1-2H9l-1 2L4.500 16Q4 11 6 7Z" fill="#fff" /><circle cx="9.500" cy="12" r="1.600" fill="#5865f2" /><circle cx="14.500" cy="12" r="1.600" fill="#5865f2" /><circle cx="18" cy="18" r="6" fill="#e8474f" /></svg></Task>
        <Task $on aria-label="Affinity Publisher"><Publisher /></Task>
        <Task aria-label="Word"><svg width="23" height="22"><path d="M11 2h11v18H11Z" fill="#fff" stroke="#2b579a" /><path d="M13 6h7M13 9h7M13 12h7M13 15h7" stroke="#2b579a" /><path d="M0 2 13 0v22L0 20Z" fill="#2b579a" /><text x="2" y="15" fontSize="10" fontWeight="700" fill="#fff">W</text></svg></Task>
      </Taskbar>
    </Shell>
  );
}
